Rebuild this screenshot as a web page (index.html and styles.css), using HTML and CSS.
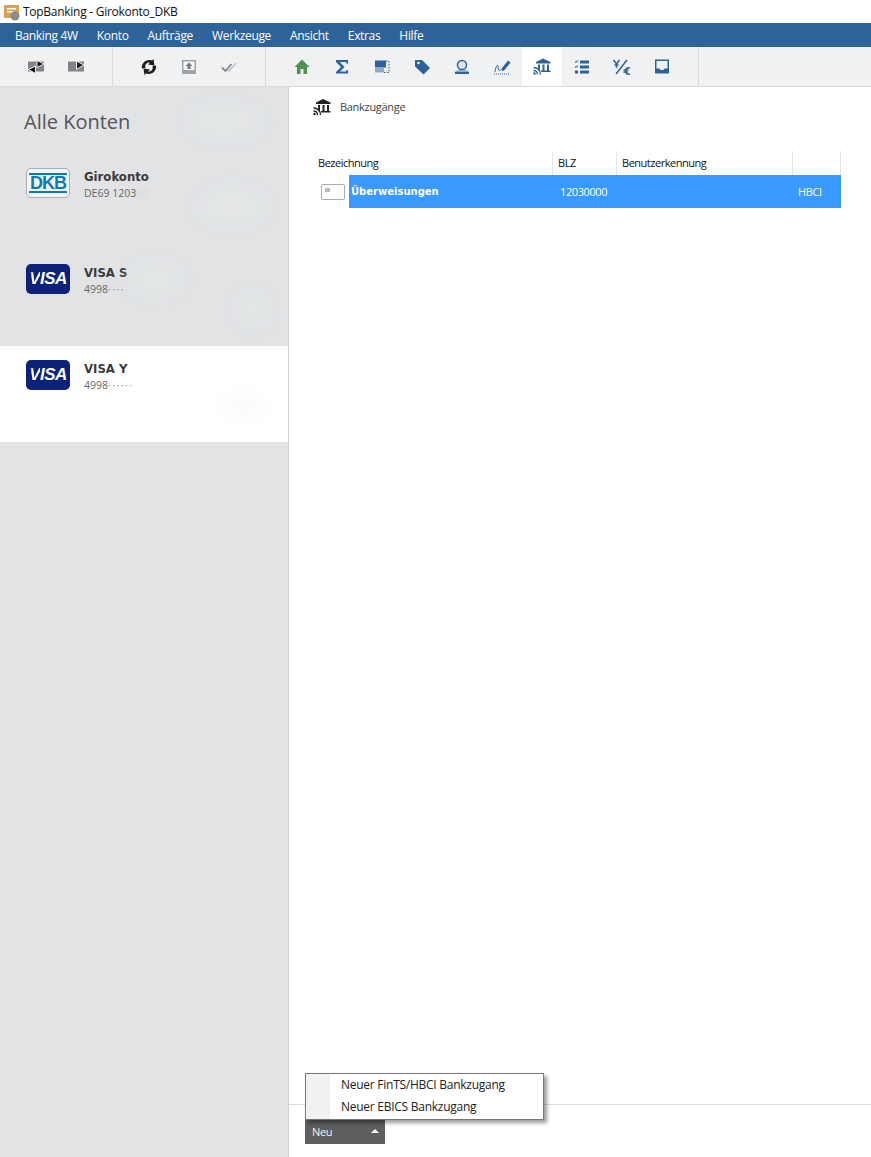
FILE: index.html
```html
<!DOCTYPE html>
<html lang="de">

<head>
    <meta charset="UTF-8">
    <title>TopBanking - Girokonto_DKB</title>
    <link rel="stylesheet" href="styles.css">
</head>

<body>

    <div id="titlebar">
        <svg class="app-icon" width="20" height="20" viewBox="0 0 20 20">
            <rect x="2" y="3" width="15" height="13" fill="#d9a24e"/>
            <rect x="5" y="6" width="9" height="1.5" fill="#fff"/>
            <rect x="5" y="9" width="6" height="1.5" fill="#fff"/>
            <circle cx="13" cy="14" r="4.5" fill="#8a8d90"/>
        </svg>
        <span>TopBanking - Girokonto_DKB</span>
    </div>

    <div id="menubar">
        <span class="menu-item">Banking 4W</span>
        <span class="menu-item">Konto</span>
        <span class="menu-item">Aufträge</span>
        <span class="menu-item">Werkzeuge</span>
        <span class="menu-item">Ansicht</span>
        <span class="menu-item">Extras</span>
        <span class="menu-item">Hilfe</span>
    </div>

    <div id="toolbar">
        <div class="tool-group">
            <div class="tool">
                <svg width="20" height="20" viewBox="0 0 20 20">
                    <path d="M2 4.500h16v10H2z" fill="#828487"/>
                    <path d="M11 3.500l7 3.500-7 3.500z" fill="#111" stroke="#eff1f3"/>
                    <path d="M9.500 9l-7 3.500 7 4z" fill="#111" stroke="#eff1f3"/>
                </svg>
            </div>
            <div class="tool">
                <svg width="20" height="20" viewBox="0 0 20 20">
                    <path d="M2 4.500h16v10H2z" fill="#828487"/>
                    <path d="M10.500 4l7.500 4-7.500 4.500z" fill="#222" stroke="#eff1f3"/>
                </svg>
            </div>
        </div>
        <div class="tool-group">
            <div class="tool">
                <svg width="20" height="20" viewBox="0 0 20 20">
                    <path d="M3 11.500C2 6.500 7 1.500 13 3.500l1.500-1.500 1 6.500-6.500-1 2-2C7.500 5 5.500 8 6.500 11z" fill="#1c1c1c"/>
                    <path d="M17 8.500c1 5-4 10-10 8l-1.500 1.500-1-6.500 6.500 1-2 2c3.500 .5 5.500-2.500 4.500-5.500z" fill="#1c1c1c"/>
                </svg>
            </div>
            <div class="tool">
                <svg width="20" height="20" viewBox="0 0 20 20">
                    <path d="M3 3h14v14H3z" fill="#a0a3a5"/>
                    <path d="M4.500 4.500h11V13h-11z" fill="#f4f5f6"/>
                    <path d="M10 5.500l3.500 3.500h-2v3h-3V9h-2z" fill="#777a7d"/>
                </svg>
            </div>
            <div class="tool">
                <svg width="20" height="20" viewBox="0 0 20 20">
                    <path d="M3 10.500l3.500 3.500 6-7" fill="none" stroke="#85888b" stroke-width="1.800"/>
                    <path d="M9 13l1 1 7-8" fill="none" stroke="#c3c5c7" stroke-width="1.800"/>
                </svg>
            </div>
        </div>
        <div class="tool-group">
            <div class="tool">
                <svg width="20" height="20" viewBox="0 0 20 20">
                    <path d="M10 2.500L2.500 10H5v7h3.500v-5h3v5H15v-7h2.500z" fill="#4f8f4f"/>
                </svg>
            </div>
            <div class="tool">
                <svg width="20" height="20" viewBox="0 0 20 20">
                    <path d="M4 3h12v3.500h-1.500L14 5H8l4.500 5L8 14.500h6l.5-1.500H16v3.500H4v-1.500l5-5-5-5z" fill="#2d6399"/>
                </svg>
            </div>
            <div class="tool">
                <svg width="20" height="20" viewBox="0 0 20 20">
                    <rect x="3" y="3.500" width="11" height="7" fill="#2d6399"/>
                    <rect x="3" y="10.500" width="9" height="5" fill="#8fabc8"/>
                    <path d="M12 15.500h5V4h-3" fill="none" stroke="#2d6399" stroke-dasharray="1.500 1.500"/>
                </svg>
            </div>
            <div class="tool">
                <svg width="20" height="20" viewBox="0 0 20 20">
                    <path d="M3 3h7l8 8-6.500 6.500L3 9.500z" fill="#2d6399"/>
                    <circle cx="6.500" cy="6" r="1.300" fill="#eff1f3"/>
                </svg>
            </div>
            <div class="tool">
                <svg width="20" height="20" viewBox="0 0 20 20">
                    <circle cx="10" cy="8" r="4.500" fill="#dfe5ec" stroke="#2d6399" stroke-width="1.500"/>
                    <path d="M6 13c-2 .5-3 1.500-3 2.500h14c0-1-1-2-3-2.500z" fill="#8fabc8"/>
                    <path d="M3 15h14v2H3z" fill="#2d6399"/>
                </svg>
            </div>
            <div class="tool">
                <svg width="20" height="20" viewBox="0 0 20 20">
                    <path d="M3 15c.5-5 2.500-8 3-6S6 15 8 13s2 1.500 3.500 .5" fill="none" stroke="#2d6399"/>
                    <path d="M10 11l6-7.500 2.500 2L12.500 13l-2.500 .5z" fill="#2d6399"/>
                    <path d="M2 17h16" stroke="#2d6399" stroke-dasharray="1 1"/>
                </svg>
            </div>
            <div class="tool active">
                <svg width="20" height="20" viewBox="0 0 20 20">
                    <path d="M11 1.500l7.500 3.500v1.500H4V5z" fill="#2d6399"/>
                    <path d="M6 7.500h2v6H6zM10.500 7.500h2v6h-2zM15 7.500h2v6h-2zM9 13.500h9.500v1.500H9z" fill="#2d6399"/>
                    <path d="M1.500 10.500c4 0 7 3 7 7M1.500 13.500c2.500 0 4 1.500 4 4" fill="none" stroke="#2d6399" stroke-width="1.300"/>
                    <circle cx="2.500" cy="16.500" r="1.200" fill="#2d6399"/>
                </svg>
            </div>
            <div class="tool">
                <svg width="20" height="20" viewBox="0 0 20 20">
                    <path d="M8 3.500h9v3H8zM8 8.500h9v3H8zM8 13.500h9v3H8z" fill="#2d6399"/>
                    <path d="M3 4.500l1 1 2-2M3 9.500l1 1 2-2" fill="none" stroke="#5a84ae" stroke-width="1.100"/>
                    <rect x="3.500" y="14" width="2" height="2" fill="none" stroke="#2d6399"/>
                </svg>
            </div>
            <div class="tool">
                <svg width="20" height="20" viewBox="0 0 20 20">
                    <path d="M1.500 3l3 4 3-4M4.500 7v4M2.500 8h4" fill="none" stroke="#2d6399" stroke-width="1.500"/>
                    <path d="M4 17L15 3" stroke="#2d6399" stroke-width="1.500"/>
                    <path d="M18 11c-3-1-4.500 1-4.500 3s1.500 4 4.500 3M11.500 13h5M11.500 15h4.500" fill="none" stroke="#2d6399" stroke-width="1.400"/>
                </svg>
            </div>
            <div class="tool">
                <svg width="20" height="20" viewBox="0 0 20 20">
                    <path d="M3 2.500h14v14H3z" fill="#2d6399"/>
                    <path d="M4.500 4h11v7.500h-3l-1 1.500h-3l-1-1.500h-3z" fill="#eff1f3"/>
                </svg>
            </div>
        </div>
    </div>

    <div id="main">
        <div id="sidebar">
            <h1 class="side-title">Alle Konten</h1>
            <span class="smudge smudge-title"></span>

            <div class="account">
                <div class="logo logo-dkb"><span>DKB</span></div>
                <div class="account-text">
                    <div class="account-name">Girokonto</div>
                    <div class="account-nr">DE69 1203<span class="faded">00</span></div>
                </div>
                <span class="smudge smudge-a"></span>
            </div>
            <div class="account">
                <div class="logo logo-visa"><span class="visa-v">V</span><span>ISA</span></div>
                <div class="account-text">
                    <div class="account-name">VISA S</div>
                    <div class="account-nr">4998<span class="dots">····</span></div>
                </div>
                <span class="smudge smudge-b"></span>
                <span class="smudge smudge-c"></span>
            </div>
            <div class="account selected">
                <div class="logo logo-visa"><span class="visa-v">V</span><span>ISA</span></div>
                <div class="account-text">
                    <div class="account-name">VISA Y</div>
                    <div class="account-nr">4998<span class="dots">······</span></div>
                </div>
                <span class="smudge smudge-d"></span>
            </div>
        </div>

        <div id="content">
            <div class="content-head">
                <svg width="20" height="20" viewBox="0 0 20 20">
                    <path d="M11 2l7.500 3.500v1.500H4V5.500z" fill="#222"/>
                    <path d="M6 8h2v6H6zM10.500 8h2v6h-2zM15 8h2v6h-2zM9 14h9.500v1.500H9z" fill="#222"/>
                    <path d="M1.500 11c4 0 7 3 7 7M1.500 14c2.500 0 4 1.500 4 4" fill="none" stroke="#222" stroke-width="1.300"/>
                    <circle cx="2.500" cy="17" r="1.200" fill="#222"/>
                </svg>
                <span>Bankzugänge</span>
            </div>

            <div class="table">
                <div class="table-head">
                    <div class="th">Bezeichnung</div>
                    <div class="th">BLZ</div>
                    <div class="th">Benutzerkennung</div>
                    <div class="th"></div>
                </div>
                <div class="table-row">
                    <div class="row-check"><span class="check-box"></span></div>
                    <div class="row-cells">
                        <div class="cell-name">Überweisungen</div>
                        <div class="cell">12030000</div>
                        <div class="cell"></div>
                        <div class="cell cell-last">HBCI</div>
                    </div>
                </div>
            </div>

            <div class="footer">
                <div class="new-btn">
                    <span>Neu</span>
                    <span class="caret"></span>
                    <div class="popup">
                        <div class="popup-item">Neuer FinTS/HBCI Bankzugang</div>
                        <div class="popup-item">Neuer EBICS Bankzugang</div>
                    </div>
                </div>
            </div>
        </div>
    </div>

</body>

</html>
```

FILE: styles.css
```css
* {
    box-sizing: border-box;
}

html,
body {
    height: 100%;
}

body {
    margin: 0;
    display: flex;
    flex-direction: column;
    font-family: "Open Sans", "Noto Sans", sans-serif;
    font-size: 11px;
    letter-spacing: -0.3px;
    color: #333;
    background-color: #fff;
}

#titlebar {
    height: 23px;
    display: flex;
    align-items: center;
    gap: 1px;
    padding-left: 2px;
    font-size: 12px;
    letter-spacing: -0.27px;
    color: #111;
}

#menubar {
    height: 24px;
    display: flex;
    align-items: center;
    padding-left: 15px;
    gap: 19px;
    background-color: #2e6399;
    color: #fff;
    font-size: 12px;
    letter-spacing: -0.33px;
}

#toolbar {
    height: 40px;
    display: flex;
    background-color: #eff1f3;
    border-bottom: 1px solid #d9dadc;
}

.tool-group {
    display: flex;
    padding: 0 16px;
    border-right: 1px solid #d6d7d9;
}

.tool {
    width: 40px;
    display: flex;
    align-items: center;
    justify-content: center;
}

.tool.active {
    background-color: #fff;
}

#main {
    flex: 1;
    display: flex;
    min-height: 0;
}

#sidebar {
    position: relative;
    width: 289px;
    background-color: #e1e3e5;
    border-right: 1px solid #cfd0d2;
}

.side-title {
    margin: 0;
    height: 67px;
    padding: 20px 0 0 24px;
    font-size: 20px;
    line-height: 30px;
    font-weight: 400;
    letter-spacing: 0;
    color: #555;
}

.account {
    position: relative;
    height: 96px;
    display: flex;
    padding: 14px 0 0 26px;
    gap: 14px;
}

.account.selected {
    background-color: #fff;
}

.logo {
    width: 44px;
    height: 30px;
    border-radius: 5px;
    display: flex;
    align-items: center;
    justify-content: center;
}

.logo-dkb {
    background-color: #f4f5f6;
    border: 1px solid #a9abad;
    color: #0a7ab8;
    font-family: "Liberation Sans", sans-serif;
    font-weight: bold;
    font-size: 18px;
    letter-spacing: -1px;
}

.logo-dkb span {
    border-top: 2px solid #0a7ab8;
    border-bottom: 2px solid #0a7ab8;
    line-height: 16px;
    padding: 0 1px;
}

.logo-visa {
    background-color: #0a2277;
    color: #fff;
    font-family: "Liberation Sans", sans-serif;
    font-weight: bold;
    font-style: italic;
    font-size: 17px;
    letter-spacing: -0.5px;
}

.visa-v {
    background: linear-gradient(120deg, #e3b452 24%, #fff 30%);
    -webkit-background-clip: text;
    background-clip: text;
    color: transparent;
}

.account-text {
    padding-top: 1px;
}

.account-name {
    font-family: "DejaVu Sans", sans-serif;
    font-weight: bold;
    font-size: 11.700px;
    letter-spacing: 0;
    line-height: 17px;
    color: #3a3a3a;
}

.account-nr {
    font-size: 10.500px;
    letter-spacing: 0;
    line-height: 15px;
    color: #666;
}

.dots {
    color: #888;
    letter-spacing: 1.500px;
}

.faded {
    color: #d8dadc;
}

.smudge {
    position: absolute;
    border-radius: 50%;
    background-color: #e4e6e7;
    filter: blur(8px);
}

.selected .smudge {
    background-color: #fbfbfb;
}

.smudge-title {
    left: 190px;
    top: 20px;
    width: 70px;
    height: 30px;
}

.smudge-a {
    left: 200px;
    top: 35px;
    width: 65px;
    height: 35px;
}

.smudge-b {
    left: 130px;
    top: 15px;
    width: 50px;
    height: 28px;
}

.smudge-c {
    left: 240px;
    top: 45px;
    width: 26px;
    height: 30px;
}

.smudge-d {
    left: 220px;
    top: 48px;
    width: 44px;
    height: 24px;
}

#content {
    flex: 1;
    display: flex;
    flex-direction: column;
}

.content-head {
    height: 39px;
    display: flex;
    align-items: center;
    gap: 8px;
    padding-left: 23px;
    color: #444;
}

.table {
    margin: 25px 30px 0 24px;
    flex: 1;
}

.table-head {
    display: grid;
    grid-template-columns: 240px 64px 176px 48px;
    height: 24px;
}

.th {
    padding-left: 5px;
    line-height: 24px;
    color: #111;
    letter-spacing: -0.48px;
    border-right: 1px solid #e3e4e5;
}

.table-row {
    display: flex;
    height: 33px;
}

.row-check {
    width: 36px;
    display: flex;
    align-items: center;
    padding-left: 8px;
}

.check-box {
    width: 24px;
    height: 16px;
    border: 1px solid #aaa;
    border-radius: 2px;
    background: linear-gradient(#bbb, #bbb) 3px 3px / 5px 4px no-repeat;
}

.row-cells {
    flex: 1;
    display: grid;
    grid-template-columns: 204px 64px 176px 48px;
    align-items: center;
    background-color: #3999ff;
    color: #fff;
}

.cell-name {
    padding-left: 2px;
    font-family: "DejaVu Sans", sans-serif;
    font-weight: bold;
    font-size: 10px;
    letter-spacing: 0;
}

.cell {
    padding-left: 7px;
    letter-spacing: -0.4px;
}

.cell-last {
    padding-left: 5px;
}

.footer {
    height: 53px;
    border-top: 1px solid #dcdcdc;
    padding: 15px 0 0 16px;
}

.new-btn {
    position: relative;
    width: 80px;
    height: 24px;
    display: flex;
    align-items: center;
    justify-content: space-between;
    padding: 0 6px 2px 7px;
    background-color: #5e5f61;
    color: #f4f4f4;
}

.caret {
    border-left: 4px solid transparent;
    border-right: 4px solid transparent;
    border-bottom: 4px solid #fff;
}

.popup {
    position: absolute;
    left: 0;
    bottom: 24px;
    width: 239px;
    height: 47px;
    padding-left: 24px;
    background: linear-gradient(90deg, #f1f1f1 24px, #fff 24px);
    border: 1px solid #777;
    box-shadow: 3px 3px 4px rgba(0, 0, 0, 0.4);
    color: #222;
    font-size: 12px;
    letter-spacing: -0.26px;
}

.popup-item {
    height: 22px;
    line-height: 22px;
    padding-left: 11px;
}
```
